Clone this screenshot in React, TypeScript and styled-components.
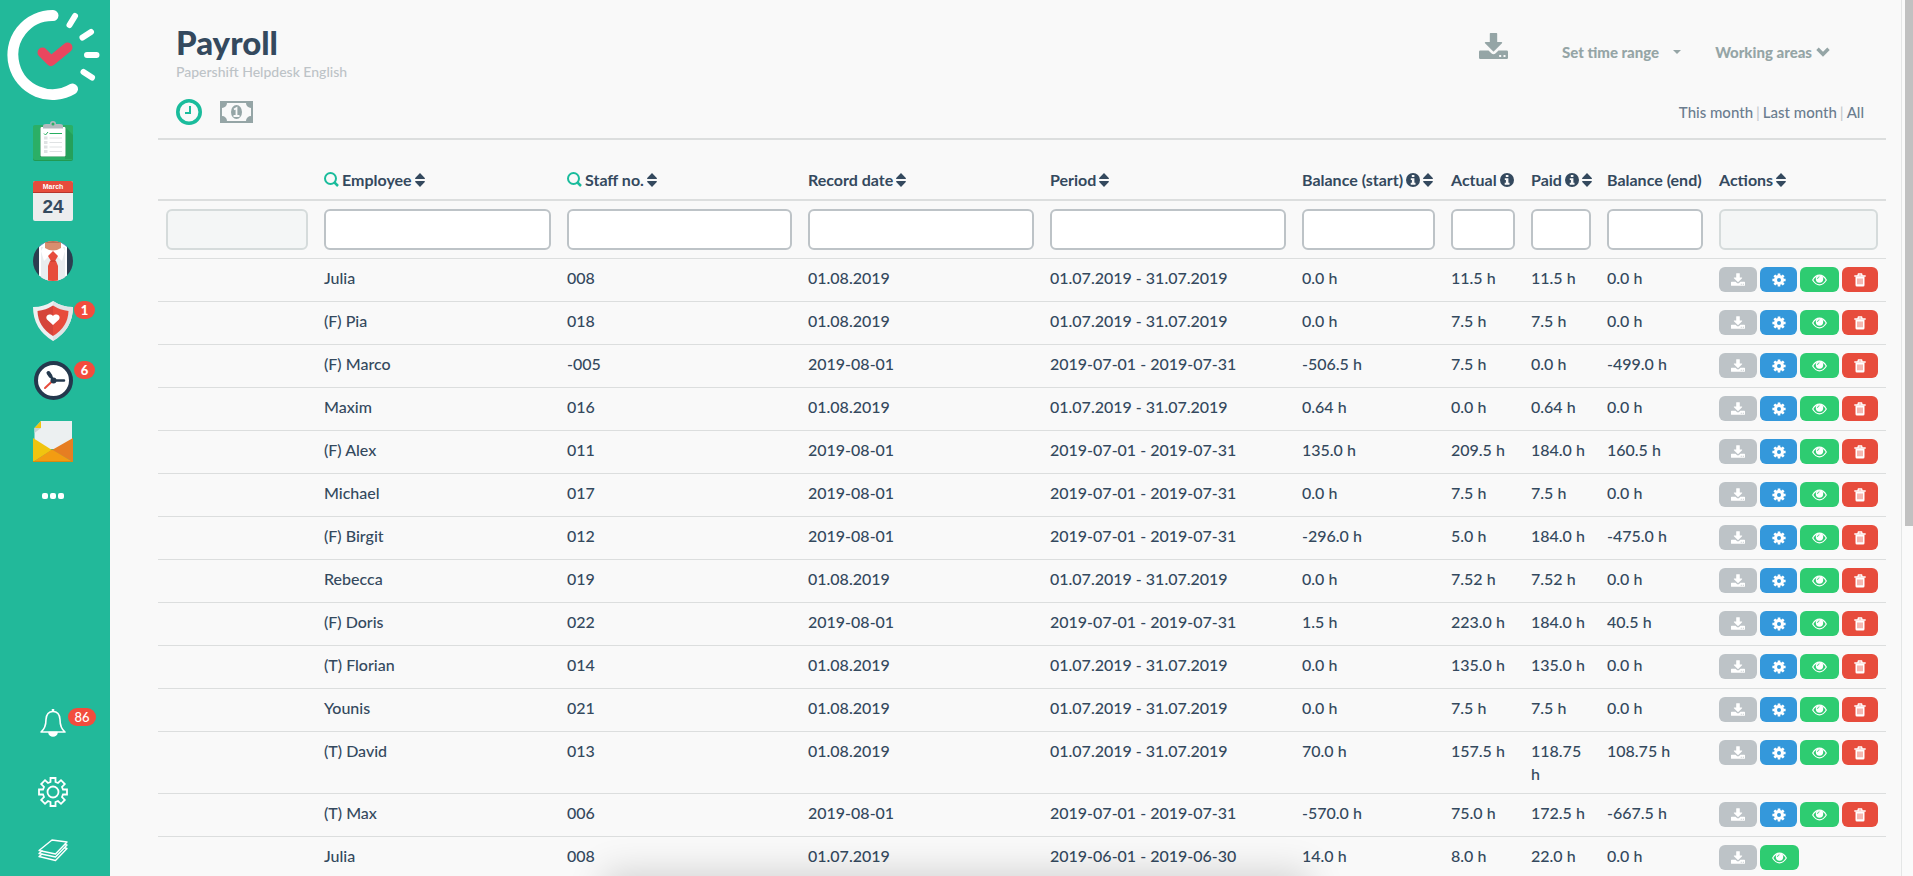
import React from "react";
import styled, { createGlobalStyle } from "styled-components";

const line = "#dcdede";

const Global = createGlobalStyle`
  * { box-sizing: border-box; }
  html { height: 100%; overflow: hidden; }
  body { margin: 0; height: 100%; background: #f9f9f9; color: #34495e; font: 500 16px/23px Lato, "Liberation Sans", sans-serif; }
  #root { height: 100%; }
  a { color: inherit; text-decoration: none; }
  button, input { font: inherit; }
`;

const Page = styled.div`
  display: flex;
  height: 100vh;
  overflow: hidden;
`;

const Sidebar = styled.nav`
  flex: none;
  width: 110px;
  display: flex;
  flex-direction: column;
  justify-content: space-between;
  background: #22b99a;
  color: #fff;
`;

const NavGroup = styled.div`
  display: flex;
  flex-direction: column;
`;

const NavLink = styled.a<{ $h: number }>`
  position: relative;
  display: flex;
  justify-content: center;
  height: ${(p) => p.$h}px;
  padding-right: 4px;
  svg { display: block; }
`;

const Logo = styled.a`
  display: block;
  height: 121px;
  padding: 8px 0 0 7px;
  svg { display: block; }
`;

const Badge = styled.span<{ $wide?: boolean }>`
  position: absolute;
  top: 0;
  left: ${(p) => (p.$wide ? 68 : 74)}px;
  width: ${(p) => (p.$wide ? 28 : 21)}px;
  height: 18px;
  border-radius: 9px;
  background: #f24c3d;
  font-size: 13px;
  font-weight: ${(p) => (p.$wide ? 500 : 900)};
  line-height: 18px;
  text-align: center;
`;

const Main = styled.main`
  flex: 1;
  min-width: 0;
  height: 100%;
  overflow: hidden;
  padding: 0 15px 0 48px;
  border-right: 1px solid #e4e6e6;
`;

const Header = styled.header`
  display: flex;
  justify-content: space-between;
  height: 92px;
  padding: 22px 56px 0 18px;
`;

const Title = styled.h1`
  margin: 0;
  font-size: 33px;
  font-weight: 900;
  line-height: 40px;
`;

const Subtitle = styled.p`
  margin: 0;
  color: #bdc3c7;
  font-size: 14px;
  line-height: 20px;
`;

const Tools = styled.div`
  display: flex;
  height: 32px;
  margin-top: 14px;
  align-items: center;
  color: #95a5a6;
  svg { display: block; }
`;

const ToolButton = styled.button`
  display: flex;
  align-items: center;
  gap: 4px;
  margin: 0 0 0 34px;
  padding: 0;
  border: 0;
  background: none;
  color: inherit;
  font-size: 15px;
  font-weight: 900;
`;

const ExportButton = styled(ToolButton)`
  margin: 0 20px 12px 0;
`;

const Caret = styled.span`
  margin-left: 10px;
  border: 4px solid transparent;
  border-top-color: #95a5a6;
  border-bottom: 0;
`;

const SubBar = styled.div`
  display: flex;
  justify-content: space-between;
  height: 48px;
  padding: 7px 22px 0 18px;
  border-bottom: 2px solid ${line};
`;

const Views = styled.div`
  display: flex;
  gap: 18px;
  svg { display: block; }
`;

const Ranges = styled.div`
  display: flex;
  gap: 3px;
  padding-top: 2px;
  color: #c5cacd;
  font-size: 15px;
  line-height: 22px;
  a { color: #6b7d8f; }
`;

const Table = styled.table`
  width: 100%;
  margin-top: 12px;
  table-layout: fixed;
  border-collapse: separate;
  border-spacing: 0;
`;

const Th = styled.th`
  height: 49px;
  padding: 16px 0 8px 8px;
  border-bottom: 2px solid ${line};
  text-align: left;
  font-weight: 700;
  white-space: nowrap;
`;

const HeadLabel = styled.span`
  display: flex;
  align-items: center;
  gap: 3px;
  height: 23px;
`;

const FilterCell = styled.td`
  padding: 8px;
`;

const FilterInput = styled.input`
  display: block;
  width: 100%;
  height: 41px;
  padding: 0 10px;
  border: 2px solid #bdc3c7;
  border-radius: 6px;
  background: #fff;
  outline: 0;
  &:disabled { border-color: #d5dbdb; background: #f4f6f6; }
`;

const Td = styled.td`
  height: 43px;
  padding: 7px 8px 8px;
  border-top: 1px solid ${line};
  vertical-align: top;
`;

const Actions = styled.div`
  display: flex;
  gap: 3px;
  padding-top: 1px;
`;

const ActionButton = styled.button<{ $w: number; $bg: string }>`
  display: flex;
  align-items: center;
  justify-content: center;
  width: ${(p) => p.$w}px;
  height: 25px;
  padding: 0;
  border: 0;
  border-radius: 6px;
  background: ${(p) => p.$bg};
  color: #fff;
`;

const ScrollTrack = styled.div`
  flex: none;
  width: 11px;
  padding-left: 3px;
  background: #fafafa;
`;

const ScrollThumb = styled.div`
  height: 60%;
  background: #c1c1c1;
`;

const BottomShade = styled.div`
  position: fixed;
  bottom: -40px;
  left: 32%;
  right: 32%;
  height: 36px;
  box-shadow: 0 0 36px 8px rgba(0, 0, 0, 0.16);
  pointer-events: none;
`;

const LogoMark = () => (
  <svg width="96" height="96" viewBox="6 8 96 96" fill="none" strokeLinecap="round">
    <path d="M52 15.500A39.500 39.500 0 1 0 71.500 89" stroke="#fff" strokeWidth="11" />
    <path d="M74 16l-5.500 9M90 32l-8.500 5.500M86 55h9.500M82.500 72l8.500 5.500" stroke="#fff" strokeWidth="6" />
    <path d="M41.500 52.500l8.500 8.500 16.500-13.500" stroke="#e9475f" strokeWidth="10" strokeLinejoin="round" />
  </svg>
);

const PlanIcon = () => (
  <svg width="40" height="42" viewBox="0 0 40 42">
    <rect y="5" width="40" height="35" rx="2" fill="#219a52" />
    <rect y="4" width="40" height="35" rx="2" fill="#2baf66" />
    <path d="M33 7l7 7v24h-8z" fill="#25a05a" />
    <rect x="7" y="6" width="26" height="30" rx="1" fill="#1f8d4b" />
    <rect x="7.500" y="6" width="25" height="29.500" rx="1" fill="#fff" />
    <path d="M10 7.500V5q0-2 3-2h4a3 3 0 0 1 6 0h4q3 0 3 2v2.500z" fill="#b3b9bd" />
    <circle cx="20" cy="3" r="1.500" fill="#2baf66" />
    <path d="M11 12.500l1.500 1.500 2.500-3" stroke="#27ae60" fill="none" />
    <path d="M16.500 12.500H29" stroke="#27ae60" />
    <path d="M16.500 17H29M16.500 21.500H29M16.500 26H29M16.500 30.500H29" stroke="#dfe2e3" />
    <path d="M11 17h3.500M11 21.500h3.500M11 26h3.500M11 30.500h3.500" stroke="#dfe2e3" strokeWidth="3" />
  </svg>
);

const CalendarIcon = () => (
  <svg width="40" height="40" viewBox="0 0 40 40" fontFamily="Liberation Sans, sans-serif" fontWeight="700" textAnchor="middle">
    <rect width="40" height="40" rx="2" fill="#ecedee" />
    <path d="M0 12V2q0-2 2-2h36q2 0 2 2v10z" fill="#e74c3c" />
    <path d="M0 11.500h40" stroke="#b7352d" />
    <text x="20" y="8" fontSize="7" fill="#fff">March</text>
    <text x="20" y="32" fontSize="19" fill="#34495e">24</text>
  </svg>
);

const StaffIcon = () => (
  <svg width="40" height="40" viewBox="0 0 40 40">
    <clipPath id="staff"><circle cx="20" cy="20" r="20" /></clipPath>
    <g clipPath="url(#staff)">
      <path d="M0 0h40v40H0z" fill="#2c3e50" />
      <path d="M6 0h28v40H6z" fill="#fff" />
      <path d="M8 6h24v34H8z" fill="#e9edef" />
      <path d="M5 0h9L6 6zM35 0h-9l8 6z" fill="#2a7fc4" />
      <path d="M12 3L8 10l3 10 9-9 9 9 3-10-4-7z" fill="#fff" />
      <path d="M12 0h16v7q-8 5-16 0z" fill="#d88e6f" />
      <path d="M12 0h16v2H12z" fill="#b87358" />
      <path d="M20 10l5 5-3 5h-4l-3-5z" fill="#e74c3c" />
      <path d="M17 20h6l2 5v15H15V25z" fill="#e74c3c" />
      <path d="M17.500 20h5" stroke="#c0392b" />
    </g>
  </svg>
);

const ShieldIcon = () => (
  <svg width="40" height="40" viewBox="0 0 40 40">
    <path d="M20 0Q11 6 0 6Q0 28 20 40Q40 28 40 6Q29 6 20 0z" fill="#ecf0f1" />
    <path d="M20 0Q29 6 40 6Q40 28 20 40z" fill="#e0e4e6" />
    <path d="M20 4.500Q13 9 4.500 10Q5 26 20 35z" fill="#d5443a" />
    <path d="M20 4.500Q27 9 35.500 10Q35 26 20 35z" fill="#e74c3c" />
    <path d="M20 24l-6-5.500c-2.500-4 3-7 6-3.500 3-3.500 8.500-.5 6 3.500z" fill="#fff" />
  </svg>
);

const ClockIcon = () => (
  <svg width="40" height="40" viewBox="0 0 40 40" strokeLinecap="round">
    <circle cx="20.500" cy="19.500" r="17.500" fill="#fff" stroke="#24384d" strokeWidth="4" />
    <path d="M12 27l8-7.500" stroke="#e74c3c" strokeWidth="2" />
    <path d="M15.500 12l5 7.500H31" fill="none" stroke="#24384d" strokeWidth="2.500" />
    <path d="M15.500 12l2 3" stroke="#24384d" strokeWidth="4" />
    <circle cx="20.500" cy="19.500" r="3" fill="#24384d" />
  </svg>
);

const MailIcon = () => (
  <svg width="40" height="42" viewBox="0 0 40 42">
    <path d="M8 0h31v28H1.500V7z" fill="#ecf0f1" />
    <path d="M8 0v7H1.500z" fill="#f1c40f" />
    <path d="M8 7H1.500V12z" fill="#ccd1d3" />
    <path d="M0 17l19 12L0 41z" fill="#f1c40f" />
    <path d="M40 17L19 29l21 12z" fill="#e67e22" />
    <path d="M0 41l19-12.500L40 41z" fill="#f39c12" />
    <path d="M0 40.500h40" stroke="#d98a10" />
  </svg>
);

const BellIcon = () => (
  <svg width="26" height="30" viewBox="0 0 26 30" fill="none" stroke="#fff" strokeWidth="1.600" strokeLinejoin="round">
    <path d="M1 24Q6 20 6 11.500Q6.500 3.500 13 3.500T20 11.500Q20 20 25 24z" />
    <path d="M13 1v2" strokeWidth="2.500" />
    <path d="M9 24.500a4 3.500 0 0 0 8 0z" fill="#fff" />
  </svg>
);

const GearIcon = () => (
  <svg width="30" height="30" viewBox="0 0 30 30" fill="none" stroke="#fff" strokeWidth="1.800">
    <path d="M12.500 1h5v4l2.500 1 3-2.800 3.800 3.800-2.800 3 1 2.500h4v5h-4l-1 2.500 2.800 3-3.800 3.800-3-2.800-2.500 1v4h-5v-4l-2.500-1-3 2.800-3.800-3.800 2.800-3-1-2.500H1v-5h4l1-2.500-2.800-3L7 3.200l3 2.800 2.500-1z" />
    <circle cx="15" cy="15" r="5.500" />
  </svg>
);

const LayersIcon = () => (
  <svg width="30" height="24" viewBox="0 0 30 24" fill="none" stroke="#fff" strokeWidth="1.400" strokeLinejoin="round">
    <path d="M14 1l15 2-11.500 12L1 11.500z" />
    <path d="M4.500 11.500L1 14.500l16.500 3.500L29 6l-3-.5" />
    <path d="M4.500 14.800L1 17.500l16.500 4L29 9.500l-3-1" />
  </svg>
);

const TimeIcon = () => (
  <svg width="26" height="26" viewBox="0 0 26 26" fill="none" stroke="#1abc9c">
    <circle cx="13" cy="13" r="11.200" strokeWidth="3.600" />
    <path d="M14 7v7H9" strokeWidth="2" />
  </svg>
);

const MoneyIcon = () => (
  <svg width="33" height="26" viewBox="0 0 33 26">
    <rect x="1" y="3" width="31" height="20" fill="none" stroke="#95a5a6" strokeWidth="2" />
    <path d="M2 4h5a5 5 0 0 1-5 5zM31 4h-5a5 5 0 0 0 5 5zM2 22h5a5 5 0 0 0-5-5zM31 22h-5a5 5 0 0 1 5-5z" fill="#95a5a6" />
    <ellipse cx="16.500" cy="13" rx="5.500" ry="7" fill="#95a5a6" />
    <path d="M14 10.500l2.500-1.500v7.500M13.500 17h6" stroke="#f9f9f9" strokeWidth="1.800" fill="none" />
  </svg>
);

const SearchIcon = () => (
  <svg width="15" height="15" viewBox="0 0 15 15" fill="none" stroke="#1abc9c" strokeWidth="2">
    <circle cx="6.500" cy="6.500" r="5.500" />
    <path d="M10.500 10.500L14 14" strokeWidth="2.500" />
  </svg>
);

const SortIcon = () => (
  <svg width="10" height="14" viewBox="0 0 10 14" fill="currentColor">
    <path d="M5 0l4.800 5q.4 1-.6 1H.8q-1 0-.6-1zM5 14L.2 9q-.4-1 .6-1h8.400q1 0 .6 1z" />
  </svg>
);

const InfoIcon = () => (
  <svg width="14" height="14" viewBox="0 0 14 14">
    <circle cx="7" cy="7" r="7" fill="currentColor" />
    <path d="M5.800 2h2.600v2H5.800zM4.800 5.200h3.600v4.600h1.100v1.900H4.700V9.800h1.200V7H4.800z" fill="#f9f9f9" />
  </svg>
);

const ChevronIcon = () => (
  <svg width="14" height="10" viewBox="0 0 14 10" fill="none" stroke="currentColor" strokeWidth="3.400">
    <path d="M1.500 1.800L7 7.300l5.500-5.500" />
  </svg>
);

const DownloadIcon = ({ width, height }: { width: number; height: number }) => (
  <svg width={width} height={height} viewBox="0 0 29 26" fill="currentColor">
    <path d="M11.500 0h6q.7 0 .7.700V9h4.300q1.200.2.500 1.200l-8 8q-.5.500-1 0l-8-8q-.7-1 .5-1.200h4.300V.700q0-.7.700-.7z" />
    <path d="M1.300 17.500h8.200l2.800 2.800q2.200 1.800 4.400 0l2.800-2.800h8.200q1.300 0 1.300 1.300v5.900q0 1.300-1.300 1.300H1.300Q0 26 0 24.700v-5.900q0-1.300 1.300-1.300zM20.200 22v2h2v-2zM24.500 22v2h2v-2z" fillRule="evenodd" />
  </svg>
);

const CogIcon = () => (
  <svg width="14" height="14" viewBox="0 0 14 14" fill="none" stroke="#fff">
    <circle cx="7" cy="7" r="3.500" strokeWidth="3" />
    <path d="M7 .4v2.400M7 11.200v2.400M.4 7h2.400M11.200 7h2.400M2.300 2.300L4 4M10 10l1.700 1.700M2.300 11.700L4 10M10 4l1.700-1.700" strokeWidth="2.600" />
  </svg>
);

const EyeIcon = () => (
  <svg width="15" height="12" viewBox="0 0 15 12" fill="none" stroke="#fff">
    <path d="M.7 6Q3.500 1.200 7.500 1.200T14.300 6Q11.500 10.800 7.500 10.800T.7 6z" strokeWidth="1.200" />
    <circle cx="7.500" cy="5" r="3.700" fill="#fff" stroke="none" />
    <path d="M5.500 5q0-2 2-2.200" stroke="#2ecc71" strokeWidth=".8" />
  </svg>
);

const TrashIcon = () => (
  <svg width="12" height="14" viewBox="0 0 12 14" fill="none" stroke="#fff">
    <path d="M.3 3h11.400M3.800 3l.6-2h3.200l.6 2" strokeWidth="1.300" />
    <path d="M1.500 3.500v8.500q0 1.500 1.300 1.500h6.400q1.300 0 1.300-1.500V3.500z" fill="#fff" stroke="none" />
    <path d="M4 5.500v5.800M6 5.500v5.800M8 5.500v5.800" stroke="#e74c3c" strokeWidth=".8" />
  </svg>
);

type Column = { label: string; width: string; search?: boolean; info?: boolean; sort?: boolean };

const columns: Column[] = [
  { label: "", width: "158px" },
  { label: "Employee", width: "auto", search: true, sort: true },
  { label: "Staff no.", width: "241px", search: true, sort: true },
  { label: "Record date", width: "242px", sort: true },
  { label: "Period", width: "252px", sort: true },
  { label: "Balance (start)", width: "149px", info: true, sort: true },
  { label: "Actual", width: "80px", info: true },
  { label: "Paid", width: "76px", info: true, sort: true },
  { label: "Balance (end)", width: "112px" },
  { label: "Actions", width: "175px", sort: true },
];

const july = "01.07.2019 - 31.07.2019";
const julyIso = "2019-07-01 - 2019-07-31";

const rows: string[][] = [
  ["Julia", "008", "01.08.2019", july, "0.0 h", "11.5 h", "11.5 h", "0.0 h"],
  ["(F) Pia", "018", "01.08.2019", july, "0.0 h", "7.5 h", "7.5 h", "0.0 h"],
  ["(F) Marco", "-005", "2019-08-01", julyIso, "-506.5 h", "7.5 h", "0.0 h", "-499.0 h"],
  ["Maxim", "016", "01.08.2019", july, "0.64 h", "0.0 h", "0.64 h", "0.0 h"],
  ["(F) Alex", "011", "2019-08-01", julyIso, "135.0 h", "209.5 h", "184.0 h", "160.5 h"],
  ["Michael", "017", "2019-08-01", julyIso, "0.0 h", "7.5 h", "7.5 h", "0.0 h"],
  ["(F) Birgit", "012", "2019-08-01", julyIso, "-296.0 h", "5.0 h", "184.0 h", "-475.0 h"],
  ["Rebecca", "019", "01.08.2019", july, "0.0 h", "7.52 h", "7.52 h", "0.0 h"],
  ["(F) Doris", "022", "2019-08-01", julyIso, "1.5 h", "223.0 h", "184.0 h", "40.5 h"],
  ["(T) Florian", "014", "01.08.2019", july, "0.0 h", "135.0 h", "135.0 h", "0.0 h"],
  ["Younis", "021", "01.08.2019", july, "0.0 h", "7.5 h", "7.5 h", "0.0 h"],
  ["(T) David", "013", "01.08.2019", july, "70.0 h", "157.5 h", "118.75 h", "108.75 h"],
  ["(T) Max", "006", "2019-08-01", julyIso, "-570.0 h", "75.0 h", "172.5 h", "-667.5 h"],
  ["Julia", "008", "01.07.2019", "2019-06-01 - 2019-06-30", "14.0 h", "8.0 h", "22.0 h", "0.0 h"],
];

const RowActions = ({ locked }: { locked: boolean }) => (
  <Actions>
    <ActionButton $w={38} $bg="#bdc3c7" aria-label="Download"><DownloadIcon width={14} height={13} /></ActionButton>
    {!locked && <ActionButton $w={37} $bg="#3498db" aria-label="Settings"><CogIcon /></ActionButton>}
    <ActionButton $w={39} $bg="#2ecc71" aria-label="View"><EyeIcon /></ActionButton>
    {!locked && <ActionButton $w={36} $bg="#e74c3c" aria-label="Delete"><TrashIcon /></ActionButton>}
  </Actions>
);

export default function App() {
  return (
    <Page>
      <Global />
      <Sidebar aria-label="Main">
        <NavGroup>
          <Logo href="#home" aria-label="Home"><LogoMark /></Logo>
          <NavLink href="#plan" $h={60} aria-label="Plan"><PlanIcon /></NavLink>
          <NavLink href="#calendar" $h={60} aria-label="Calendar"><CalendarIcon /></NavLink>
          <NavLink href="#staff" $h={60} aria-label="Staff"><StaffIcon /></NavLink>
          <NavLink href="#absences" $h={60} aria-label="Absences"><ShieldIcon /><Badge>1</Badge></NavLink>
          <NavLink href="#time" $h={60} aria-label="Time tracking"><ClockIcon /><Badge>6</Badge></NavLink>
          <NavLink href="#messages" $h={72} aria-label="Messages"><MailIcon /></NavLink>
          <NavLink href="#more" $h={20} aria-label="More">
            <svg width="22" height="6" viewBox="0 0 22 6" fill="#fff">
              <rect width="6" height="6" rx="2" /><rect x="8" width="6" height="6" rx="2" /><rect x="16" width="6" height="6" rx="2" />
            </svg>
          </NavLink>
        </NavGroup>
        <NavGroup>
          <NavLink href="#notifications" $h={69} aria-label="Notifications"><BellIcon /><Badge $wide>86</Badge></NavLink>
          <NavLink href="#settings" $h={62} aria-label="Settings"><GearIcon /></NavLink>
          <NavLink href="#areas" $h={37} aria-label="Areas"><LayersIcon /></NavLink>
        </NavGroup>
      </Sidebar>
      <Main>
        <Header>
          <div>
            <Title>Payroll</Title>
            <Subtitle>Papershift Helpdesk English</Subtitle>
          </div>
          <Tools>
            <ExportButton aria-label="Export"><DownloadIcon width={29} height={26} /></ExportButton>
            <ToolButton>Set time range <Caret /></ToolButton>
            <ToolButton>Working areas <ChevronIcon /></ToolButton>
          </Tools>
        </Header>
        <SubBar>
          <Views>
            <a href="#hours" aria-label="Hours"><TimeIcon /></a>
            <a href="#wages" aria-label="Wages"><MoneyIcon /></a>
          </Views>
          <Ranges>
            <a href="#this">This month</a>
            <span>|</span>
            <a href="#last">Last month</a>
            <span>|</span>
            <a href="#all">All</a>
          </Ranges>
        </SubBar>
        <Table>
          <colgroup>
            {columns.map((c, i) => <col key={i} style={{ width: c.width }} />)}
          </colgroup>
          <thead>
            <tr>
              {columns.map((c, i) => (
                <Th key={i} scope="col">
                  <HeadLabel>
                    {c.search && <SearchIcon />}
                    {c.label}
                    {c.info && <InfoIcon />}
                    {c.sort && <SortIcon />}
                  </HeadLabel>
                </Th>
              ))}
            </tr>
          </thead>
          <tbody>
            <tr>
              {columns.map((c, i) => (
                <FilterCell key={i}>
                  <FilterInput aria-label={c.label ? `Filter ${c.label}` : "No filter"} disabled={i === 0 || i === 9} />
                </FilterCell>
              ))}
            </tr>
            {rows.map((r, i) => (
              <tr key={i}>
                <Td />
                {r.map((v, j) => <Td key={j}>{v}</Td>)}
                <Td><RowActions locked={i === 13} /></Td>
              </tr>
            ))}
          </tbody>
        </Table>
      </Main>
      <ScrollTrack><ScrollThumb /></ScrollTrack>
      <BottomShade />
    </Page>
  );
}
